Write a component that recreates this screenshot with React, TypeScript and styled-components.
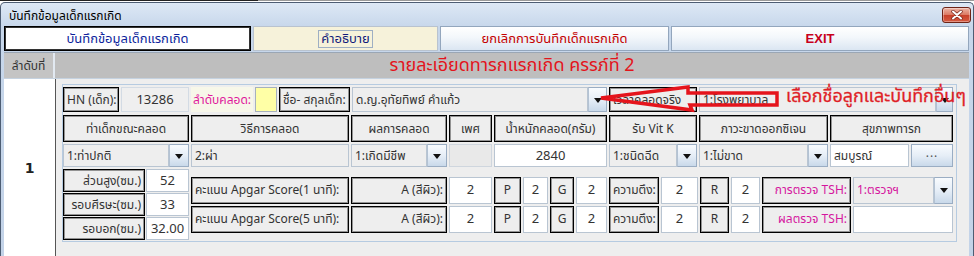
import React from "react";
import styled, { createGlobalStyle, css } from "styled-components";

const FONT = `Tahoma, "Noto Sans Thai", "Noto Sans Thai UI", Loma, Garuda, Waree, "DejaVu Sans", "Liberation Sans", sans-serif`;

const GlobalStyle = createGlobalStyle`
  html, body { margin: 0; padding: 0; background: #ffffff; }
  body { font-family: ${FONT}; font-size: 12px; color: #333; overflow: hidden; }
  * { box-sizing: border-box; }
`;

const BehindEdge = styled.div`
  height: 2px;
  background: linear-gradient(to right, #222 0 258px, #9a9a9a 258px) top / 100% 1px no-repeat, #fff;
`;

const Window = styled.div`
  height: 254px;
  border: 1px solid #4d5d73;
  border-bottom: none;
  border-radius: 5px 5px 0 0;
  background: linear-gradient(#dde8f5, #c7d7eb 24px, #c3d3e8);
  padding: 0 4px 0 3px;
  overflow: hidden;
`;

const TitleBar = styled.div`
  height: 23px;
  display: flex;
  align-items: flex-start;
  justify-content: space-between;
`;

const TitleText = styled.span`
  margin: 4px 0 0 5px;
  font-size: 12px;
  color: #000;
`;

const CloseBtn = styled.div`
  width: 29px;
  height: 16px;
  margin: 4px -2px 0 0;
  border: 1px solid #6e2417;
  border-radius: 3px;
  background: linear-gradient(#ecb4a5, #dc7a64 48%, #c8412a 52%, #d65a41);
  display: flex;
  align-items: center;
  justify-content: center;
  box-shadow: inset 0 0 0 1px rgba(255, 255, 255, 0.35);
`;

const ButtonRow = styled.div`
  display: flex;
  gap: 2px;
  height: 25px;
`;

const TopButton = styled.div<{ $w?: number; $variant: "white" | "cream" | "blue" }>`
  ${(p) => (p.$w ? css`width: ${p.$w}px;` : css`flex: 1;`)}
  display: flex;
  align-items: center;
  justify-content: center;
  font-size: 13px;
  ${(p) =>
    p.$variant === "white"
      ? css`
          background: #fff;
          border: 1px solid #000;
          box-shadow: inset 0 0 0 1px #333;
          color: #0d1f9c;
        `
      : p.$variant === "cream"
      ? css`
          background: #f6f2da;
          border: 1px solid #b9c3cf;
          color: #111a7a;
        `
      : css`
          background: linear-gradient(#ffffff, #f3f7fb 45%, #dbe6f2);
          border: 1px solid #93a6bd;
          color: #c40000;
        `}
`;

const FocusText = styled.span`
  border: 1px solid #9eafc3;
  padding: 0 2px;
  line-height: 16px;
`;

const ExitText = styled.span`
  font-family: "Liberation Sans", Arial, sans-serif;
  font-weight: bold;
  font-size: 13px;
  color: #c8001c;
`;

const HeaderRow = styled.div`
  display: flex;
  height: 26px;
  margin-top: 1px;
  border-top: 1px solid #9aa6b4;
`;

const IndexHead = styled.div`
  width: 51px;
  border-right: 2px solid #e2e9f1;
  background: #c4c4c4;
  color: #333;
  display: flex;
  align-items: center;
  justify-content: center;
  font-size: 12px;
`;

const MainHead = styled.div`
  flex: 1;
  background: #bebebe;
  color: #e3141c;
  font-size: 18px;
  display: flex;
  align-items: center;
  justify-content: center;
`;

const BodyRow = styled.div`
  display: flex;
  height: 178px;
  border-top: 1px solid #c5d2e0;
  background: #eeeeee;
`;

const IndexCell = styled.div`
  width: 52px;
  margin-right: 1px;
  background: #fff;
  border-right: 1px solid #555;
  display: flex;
  align-items: center;
  justify-content: center;
  font-family: "DejaVu Sans", sans-serif;
  font-weight: bold;
  font-size: 14px;
  color: #222;
`;

const BodyMain = styled.div`
  flex: 1;
  padding: 5px 0 0 5px;
`;

const Panel = styled.div`
  position: relative;
  width: 895px;
  border: 1px solid #b6cbe1;
  padding: 2px 3px 1px 0;
  display: flex;
  flex-direction: column;
  gap: 2px;
`;

const Row = styled.div<{ $h: number; $mb?: number; $gap?: number }>`
  display: flex;
  gap: ${(p) => p.$gap ?? 2}px;
  height: ${(p) => p.$h}px;
  margin-bottom: ${(p) => p.$mb ?? 0}px;
`;

type Align = "left" | "center" | "right";
const justify = (a?: Align) => (a === "right" ? "flex-end" : a === "center" ? "center" : "flex-start");

const Label = styled.div<{ $w: number; $align?: Align; $color?: string }>`
  width: ${(p) => p.$w}px;
  flex: none;
  border: 1px solid #000;
  box-shadow: inset 0 0 0 1px rgba(0, 0, 0, 0.38);
  background: #eeeeee;
  color: ${(p) => p.$color ?? "#333"};
  display: flex;
  align-items: center;
  justify-content: ${(p) => justify(p.$align)};
  padding: 0 3px;
  white-space: nowrap;
  overflow: hidden;
  font-size: 12px;
`;

const Field = styled.div<{ $w?: number; $bg?: string; $align?: Align; $color?: string; $size?: number; $border?: string }>`
  ${(p) => (p.$w ? css`width: ${p.$w}px; flex: none;` : css`flex: 1; min-width: 0;`)}
  border: 1px solid ${(p) => p.$border ?? "#b9c5d2"};
  background: ${(p) => p.$bg ?? "#fff"};
  color: ${(p) => p.$color ?? "#333"};
  display: flex;
  align-items: center;
  justify-content: ${(p) => justify(p.$align)};
  padding: 0 3px;
  white-space: nowrap;
  overflow: hidden;
  font-size: ${(p) => p.$size ?? 12}px;
`;

const ComboBox = styled.div<{ $w: number }>`
  width: ${(p) => p.$w}px;
  flex: none;
  display: flex;
`;

const ArrowBtn = styled.div<{ $w?: number }>`
  width: ${(p) => p.$w ?? 20}px;
  flex: none;
  border: 1px solid #9aadc3;
  border-left-color: #b3c2d3;
  background: linear-gradient(#f8fbfe, #e6eef7 50%, #c9d9ea);
  display: flex;
  align-items: center;
  justify-content: center;
  &::after {
    content: "";
    border-left: 4px solid transparent;
    border-right: 4px solid transparent;
    border-top: 5px solid #111;
    margin-top: 1px;
  }
`;

const DotsBtn = styled.div<{ $w: number }>`
  width: ${(p) => p.$w}px;
  flex: none;
  border: 1px solid #9aadc3;
  background: linear-gradient(#f8fbfe, #e6eef7 50%, #c9d9ea);
  color: #555;
  display: flex;
  align-items: flex-end;
  justify-content: center;
  padding-bottom: 4px;
  font-size: 12px;
  letter-spacing: 1px;
`;

const YellowBox = styled.div`
  width: 22px;
  flex: none;
  background: #ffffa6;
  border: 1px solid #a7b1bc;
`;

const PinkLabel = styled.div`
  width: 62px;
  flex: none;
  background: #f7f7e9;
  color: #e0189c;
  display: flex;
  align-items: center;
  padding-left: 2px;
  white-space: nowrap;
  font-size: 12px;
`;

const Bottom = styled.div`
  display: flex;
  gap: 2px;
  align-items: center;
`;

const Stack = styled.div<{ $gap: number }>`
  display: flex;
  flex-direction: column;
  gap: ${(p) => p.$gap}px;
`;

const Annotation = styled.svg`
  position: absolute;
  left: 537px;
  top: -2px;
  width: 182px;
  height: 30px;
  overflow: visible;
  pointer-events: none;
`;

const AnnotationText = styled.span`
  position: absolute;
  left: 723px;
  top: -1px;
  line-height: 26px;
  font-size: 18px;
  color: #df1f27;
  white-space: nowrap;
  pointer-events: none;
  -webkit-text-stroke: 0.3px #df1f27;
`;

function Combo({ w, text, arrow = 20, color, bg = "#eeeeee" }: { w: number; text: string; arrow?: number; color?: string; bg?: string }) {
  return (
    <ComboBox $w={w}>
      <Field $bg={bg} $color={color}>{text}</Field>
      <ArrowBtn $w={arrow} />
    </ComboBox>
  );
}

function ApgarRow({ label, tshLabel, tshCombo }: { label: string; tshLabel: string; tshCombo: boolean }) {
  const pink = "#d5169e";
  return (
    <Row $h={27}>
      <Label $w={158}>{label}</Label>
      <Label $w={96} $align="right">A (สีผิว):</Label>
      <Field $w={43} $align="center" $size={13}>2</Field>
      <Label $w={27} $align="center">P</Label>
      <Field $w={25} $align="center" $size={13}>2</Field>
      <Label $w={24} $align="center">G</Label>
      <Field $w={31} $align="center" $size={13}>2</Field>
      <Label $w={50}>ความตึง:</Label>
      <Field $w={37} $align="center" $size={13}>2</Field>
      <Label $w={29} $align="center">R</Label>
      <Field $w={29} $align="center" $size={13}>2</Field>
      <Label $w={89} $align="right" $color={pink}>{tshLabel}</Label>
      {tshCombo ? <Combo w={100} text="1:ตรวจฯ" arrow={19} color={pink} /> : <Field $w={100} />}
    </Row>
  );
}

export default function App() {
  return (
    <>
      <GlobalStyle />
      <BehindEdge />
      <Window>
        <TitleBar>
          <TitleText>บันทึกข้อมูลเด็กแรกเกิด</TitleText>
          <CloseBtn>
            <svg width="12" height="10" viewBox="0 0 12 10">
              <path d="M2 1.5 L10 8.5 M10 1.5 L2 8.5" stroke="#7a2a1e" strokeWidth="3.4" strokeLinecap="round" />
              <path d="M2 1.5 L10 8.5 M10 1.5 L2 8.5" stroke="#fff" strokeWidth="2" strokeLinecap="round" />
            </svg>
          </CloseBtn>
        </TitleBar>
        <ButtonRow>
          <TopButton $w={247} $variant="white">บันทึกข้อมูลเด็กแรกเกิด</TopButton>
          <TopButton $w={185} $variant="cream"><FocusText>คำอธิบาย</FocusText></TopButton>
          <TopButton $w={229} $variant="blue">ยกเลิกการบันทึกเด็กแรกเกิด</TopButton>
          <TopButton $variant="blue"><ExitText>EXIT</ExitText></TopButton>
        </ButtonRow>
        <HeaderRow>
          <IndexHead>ลำดับที่</IndexHead>
          <MainHead>รายละเอียดทารกแรกเกิด ครรภ์ที่ 2</MainHead>
        </HeaderRow>
        <BodyRow>
          <IndexCell>1</IndexCell>
          <BodyMain>
            <Panel>
              <Row $h={25} $mb={1}>
                <Label $w={56}>HN (เด็ก):</Label>
                <Field $w={68} $bg="#efefef" $border="#d3dbe4" $align="center" $size={13}>13286</Field>
                <PinkLabel>ลำดับคลอด:</PinkLabel>
                <YellowBox />
                <Label $w={71}>ชื่อ- สกุลเด็ก:</Label>
                <Combo w={255} arrow={19} text="ด.ญ.อุทัยทิพย์  คำแก้ว" />
                <Label $w={88}>เวลาคลอดจริง</Label>
                <Combo w={254} arrow={17} text="1:โรงพยาบาล" />
              </Row>
              <Row $h={27}>
                <Label $w={126} $align="center">ท่าเด็กขณะคลอด</Label>
                <Label $w={158} $align="center">วิธีการคลอด</Label>
                <Label $w={96} $align="center">ผลการคลอด</Label>
                <Label $w={43} $align="center">เพศ</Label>
                <Label $w={113} $align="center">น้ำหนักคลอด(กรัม)</Label>
                <Label $w={88} $align="center">รับ Vit K</Label>
                <Label $w={129} $align="center">ภาวะขาดออกซิเจน</Label>
                <Label $w={123} $align="center">สุขภาพทารก</Label>
              </Row>
              <Row $h={23}>
                <Combo w={126} text="1:ท่าปกติ" />
                <Field $w={158} $bg="#eeeeee">2:ผ่า</Field>
                <Combo w={96} text="1:เกิดมีชีพ" />
                <Field $w={43} $bg="#e9e9e9" $border="#cfd6de" />
                <Field $w={113} $align="center" $size={13}>2840</Field>
                <Combo w={88} text="1:ชนิดฉีด" />
                <Combo w={129} text="1:ไม่ขาด" />
                <Field $w={79}>สมบูรณ์</Field>
                <DotsBtn $w={42}>...</DotsBtn>
              </Row>
              <Bottom>
                <Stack $gap={1}>
                  <Row $h={23} $gap={1}>
                    <Label $w={82} $align="right">ส่วนสูง(ซม.)</Label>
                    <Field $w={43} $align="center" $size={13}>52</Field>
                  </Row>
                  <Row $h={23} $gap={1}>
                    <Label $w={82} $align="right">รอบศีรษะ(ซม.)</Label>
                    <Field $w={43} $align="center" $size={13}>33</Field>
                  </Row>
                  <Row $h={23} $gap={1}>
                    <Label $w={82} $align="right">รอบอก(ซม.)</Label>
                    <Field $w={43} $align="center" $size={13}>32.00</Field>
                  </Row>
                </Stack>
                <Stack $gap={2}>
                  <ApgarRow label="คะแนน Apgar Score(1 นาที):" tshLabel="การตรวจ TSH:" tshCombo />
                  <ApgarRow label="คะแนน Apgar Score(5 นาที):" tshLabel="ผลตรวจ TSH:" tshCombo={false} />
                </Stack>
              </Bottom>
              <Annotation viewBox="0 0 182 30">
                <polygon
                  points="1,15 88,4 88,10 177,10 177,22 90,22 92,27"
                  fill="none"
                  stroke="#e5141c"
                  strokeWidth="3.5"
                  strokeLinejoin="miter"
                />
              </Annotation>
              <AnnotationText>เลือกชื่อลูกและบันทึกอื่นๆ</AnnotationText>
            </Panel>
          </BodyMain>
        </BodyRow>
      </Window>
    </>
  );
}
